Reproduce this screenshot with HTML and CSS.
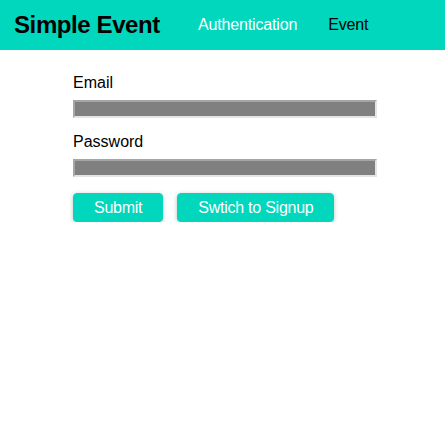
FILE: index.html
```html
<!DOCTYPE html>
<html>
<head>
<meta charset="utf-8">
<link rel="stylesheet" href="styles.css">
</head>
<body>
<header class="main-nav">
  <div class="logo"><h1>Simple Event</h1></div>
  <nav class="nav-items">
    <ul>
      <li><a class="active" href="#">Authentication</a></li>
      <li><a href="#">Event</a></li>
    </ul>
  </nav>
</header>
<main class="content">
  <form class="auth-form">
    <div class="form-control">
      <label for="email">Email</label>
      <input type="email" id="email">
    </div>
    <div class="form-control">
      <label for="password">Password</label>
      <input type="password" id="password">
    </div>
    <div class="form-actions">
      <button type="submit" class="btn">Submit</button>
      <button type="button" class="btn">Swtich to Signup</button>
    </div>
  </form>
</main>
</body>
</html>
```
FILE: styles.css
```css
html, body {
  margin: 0;
  font-family: "Liberation Sans", Arial, sans-serif;
  background: #fff;
}

.main-nav {
  height: 50px;
  background: #00d7bd;
  display: flex;
  align-items: center;
  padding: 0 14px;
  box-sizing: border-box;
}

.logo h1 {
  margin: 0;
  font-size: 24px;
  font-weight: bold;
  color: #000;
  line-height: 1;
  letter-spacing: -0.4px;
}

.nav-items {
  margin-left: 38px;
}

.nav-items ul {
  list-style: none;
  margin: 0;
  padding: 0;
  display: flex;
  gap: 31px;
}

.nav-items a {
  text-decoration: none;
  color: #000;
  font-size: 16px;
  letter-spacing: -0.15px;
}

.nav-items a.active {
  color: #fff;
}

.content {
  padding-top: 24px;
}

.auth-form {
  width: 304px;
  margin-left: 73px;
}

.form-control {
  margin-bottom: 15px;
}

.form-control + .form-control {
  margin-bottom: 16px;
}

.form-control label {
  display: block;
  font-size: 16px;
  line-height: 18px;
  margin-bottom: 8px;
  color: #000;
}

.form-control input {
  display: block;
  width: 100%;
  height: 18px;
  box-sizing: border-box;
  margin: 0;
  background: #808080;
  border: 2px solid;
  border-color: #a6a6a6 #e4e4e4 #e4e4e4 #a6a6a6;
  padding: 0;
}

.form-actions {
  display: flex;
  gap: 14px;
}

.btn {
  background: #00d7bd;
  color: #fff;
  border: 1px solid #00d7bd;
  border-radius: 4px;
  font-family: "Liberation Sans", Arial, sans-serif;
  font-size: 16px;
  letter-spacing: -0.25px;
  height: 29px;
  padding: 0 20px;
  box-shadow: 0 1px 4px rgba(0, 0, 0, 0.26);
  cursor: pointer;
}
```
